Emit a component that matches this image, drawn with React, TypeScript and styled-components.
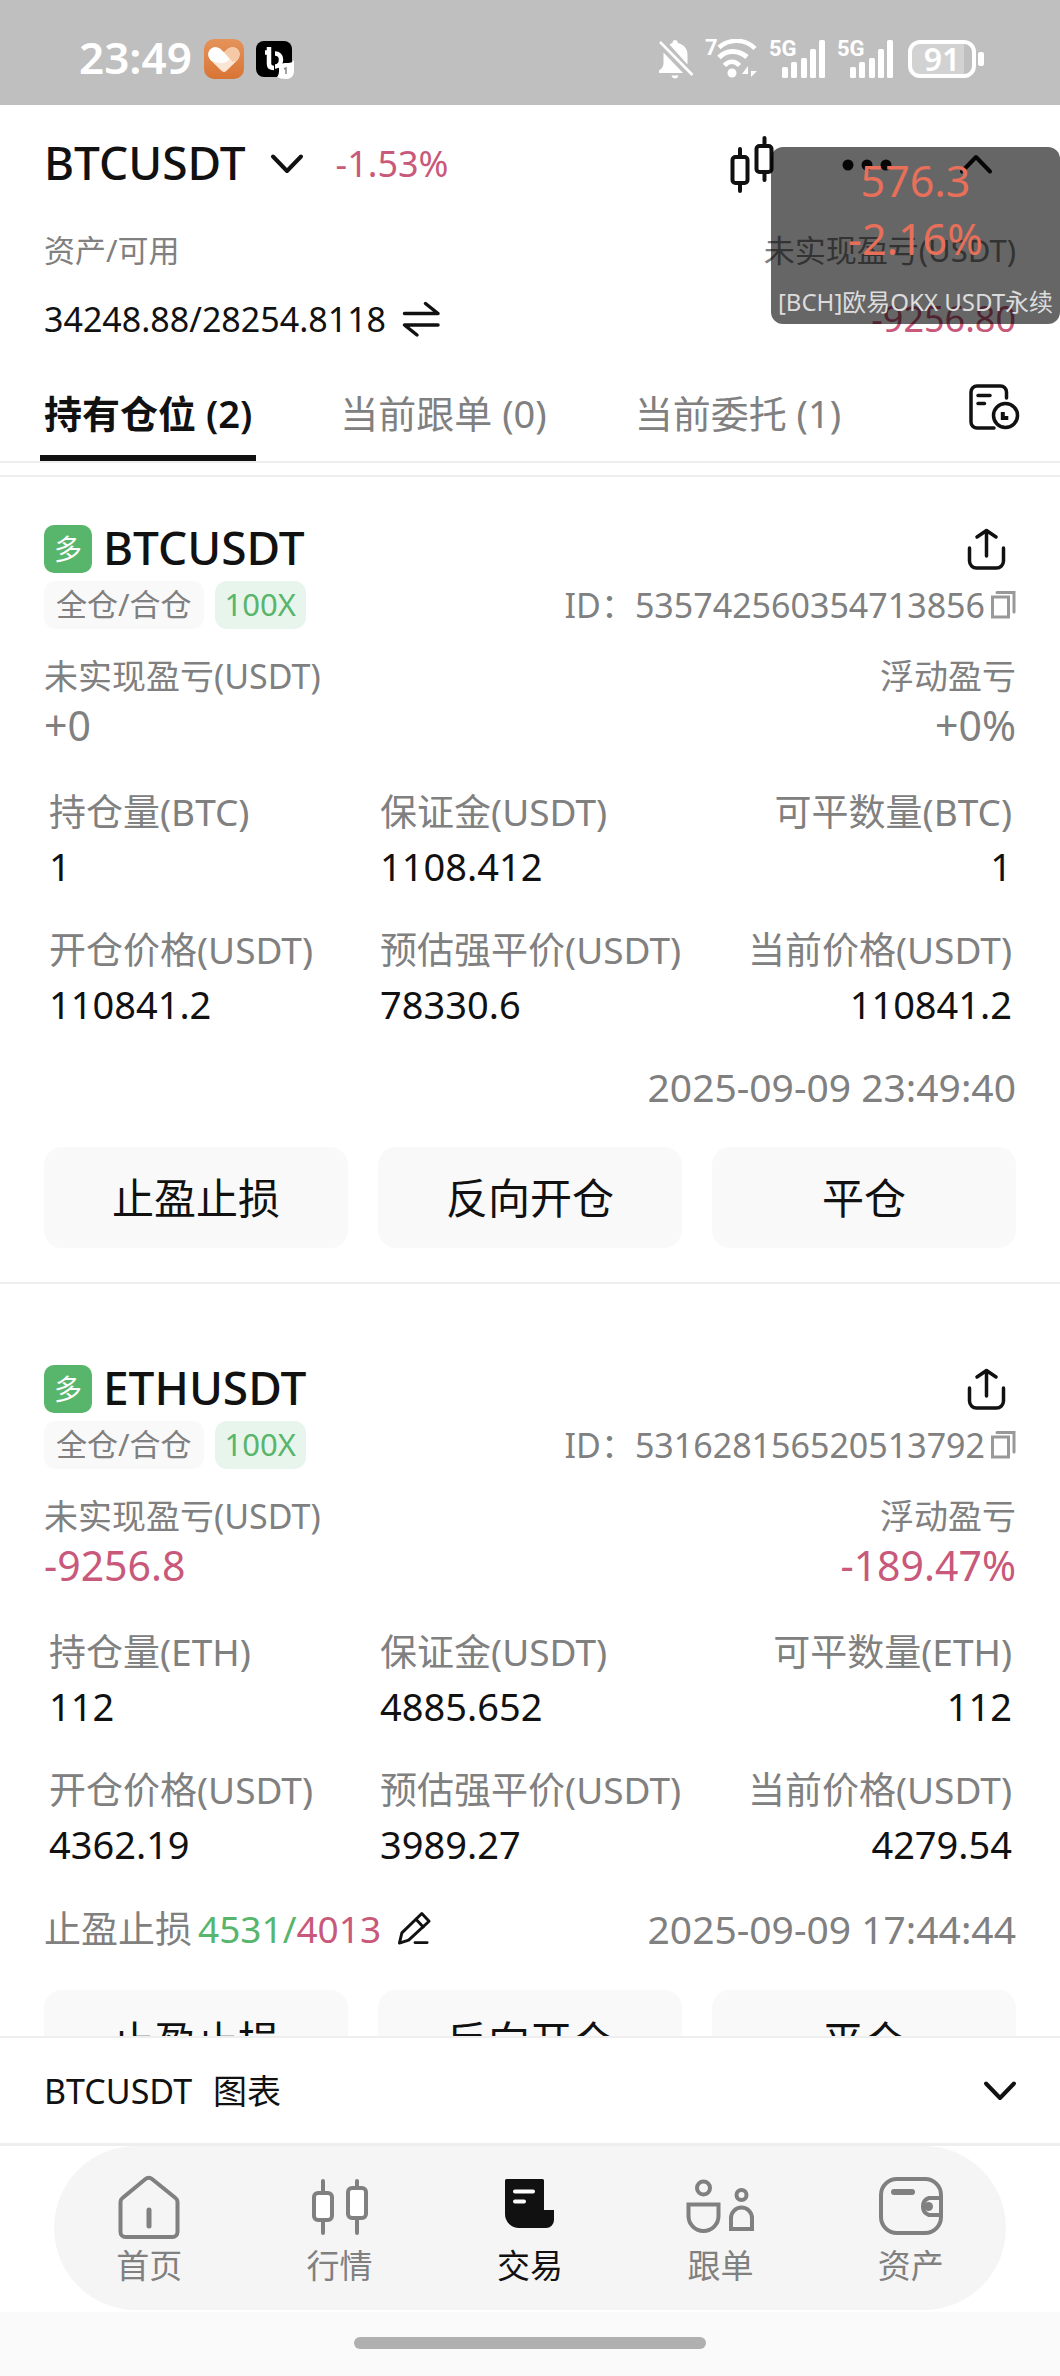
import React from "react";
import styled, { createGlobalStyle } from "styled-components";

const GREEN = "#58b56c";
const RED = "#c8597a";
const GRAY = "#808080";
const INK = "#111111";

const GlobalStyle = createGlobalStyle`
  *, *::before, *::after { box-sizing: border-box; }
  body {
    margin: 0;
    background: #ffffff;
    color: ${INK};
    font-family: "Noto Sans", "Noto Sans CJK SC", sans-serif;
  }
  button {
    font: inherit;
    color: inherit;
    background: none;
    border: 0;
    padding: 0;
    cursor: pointer;
  }
  h1, h2, dl, dt, dd, p { margin: 0; font-weight: inherit; font-size: inherit; }
  svg { display: block; flex: none; }
`;

const Screen = styled.div`
  position: relative;
  display: flex;
  flex-direction: column;
  height: 100vh;
  overflow: hidden;
  white-space: nowrap;
`;

/* ---------- status bar ---------- */

const StatusBar = styled.div`
  display: flex;
  align-items: center;
  justify-content: space-between;
  flex: none;
  height: 105px;
  padding: 12px 76px 0 79px;
  background: #bfbfbf;
  color: #ffffff;
`;

const StatusGroup = styled.div<{ $gap: number }>`
  display: flex;
  align-items: center;
  gap: ${(p) => p.$gap}px;
`;

const Clock = styled.span`
  padding-bottom: 3px;
  font-size: 44px;
  line-height: 48px;
  font-weight: 600;
`;

const Signal = styled.span`
  position: relative;
`;

const SignalLabel = styled.span`
  position: absolute;
  left: 0;
  top: -3px;
  font-family: Roboto, "Noto Sans", sans-serif;
  font-size: 22px;
  line-height: 24px;
  font-weight: 700;
`;

const WifiBox = styled(Signal)`
  padding-left: 11px;
`;

const Battery = styled.span`
  display: flex;
  align-items: center;
  gap: 2px;
  margin-left: 3px;
  &::after {
    content: "";
    width: 6px;
    height: 14px;
    border-radius: 2px;
    background: #ffffff;
  }
`;

const BatteryBody = styled.span`
  width: 68px;
  height: 38px;
  border: 4px solid #ffffff;
  border-radius: 12px;
  background: linear-gradient(90deg, #d2d2d2 86%, #bfbfbf 86%);
  font-size: 32px;
  line-height: 30px;
  font-weight: 600;
  text-align: center;
`;

/* ---------- header ---------- */

const Header = styled.header`
  flex: none;
  padding: 29px 44px 0;
`;

const HeaderRow = styled.div`
  display: flex;
  align-items: center;
  justify-content: space-between;
  height: 60px;
`;

const PairButton = styled.button`
  display: flex;
  align-items: center;
  gap: 24px;
`;

const PairGroup = styled.div`
  display: flex;
  align-items: center;
  gap: 32px;
`;

const Symbol = styled.span`
  padding-bottom: 4px;
  font-size: 46px;
  line-height: 56px;
  font-weight: 500;
`;

const Change = styled.span`
  font-size: 36px;
  line-height: 44px;
  color: ${RED};
`;

const HeaderActions = styled.div`
  display: flex;
  align-items: center;
  padding-right: 23px;
  gap: 67px;
`;

const Account = styled.dl`
  display: flex;
  justify-content: space-between;
  margin-top: 36px;
`;

const AccountItem = styled.div`
  &:last-child { text-align: right; }
`;

const AccountLabel = styled.dt`
  font-size: 31px;
  line-height: 40px;
  color: ${GRAY};
`;

const AccountValue = styled.dd`
  display: flex;
  align-items: center;
  gap: 16px;
  margin-top: 27px;
  font-size: 34px;
  line-height: 44px;
`;

const AccountPnl = styled.dd`
  margin-top: 27px;
  font-size: 36px;
  line-height: 44px;
  color: ${RED};
`;

/* ---------- tabs ---------- */

const TabBar = styled.nav`
  display: flex;
  align-items: flex-end;
  flex: none;
  gap: 80px;
  height: 122px;
  padding: 0 40px;
  border-bottom: 2px solid #eeeeee;
`;

const Tab = styled.button<{ $active?: boolean }>`
  height: 90px;
  padding: 0 4px;
  border-bottom: 6px solid ${(p) => (p.$active ? INK : "transparent")};
  font-size: 38px;
  line-height: 84px;
  font-weight: ${(p) => (p.$active ? 600 : 400)};
  color: ${(p) => (p.$active ? INK : GRAY)};
`;

const HistoryButton = styled.button`
  margin-left: auto;
  padding-bottom: 30px;
`;

/* ---------- positions ---------- */

const Positions = styled.main`
  flex: 1;
  min-height: 0;
  margin-top: 12px;
  border-top: 2px solid #eeeeee;
  overflow-y: auto;
  scrollbar-width: none;
`;

const Card = styled.article`
  padding: 81px 44px 34px;
  border-bottom: 2px solid #eeeeee;
  &:first-child { padding-top: 48px; }
`;

const Row = styled.div`
  display: flex;
  align-items: center;
  justify-content: space-between;
`;

const TitleGroup = styled.div`
  display: flex;
  align-items: center;
  gap: 11px;
  height: 48px;
`;

const Side = styled.span`
  width: 48px;
  height: 48px;
  border-radius: 10px;
  background: ${GREEN};
  color: #ffffff;
  font-size: 28px;
  line-height: 48px;
  text-align: center;
`;

const ShareButton = styled.button`
  padding-right: 8px;
`;

const TagRow = styled(Row)`
  margin-top: 8px;
  height: 48px;
`;

const Tags = styled.div`
  display: flex;
  gap: 11px;
`;

const Tag = styled.span<{ $green?: boolean }>`
  height: 48px;
  padding: 0 ${(p) => (p.$green ? 10 : 12)}px;
  border-radius: 12px;
  background: ${(p) => (p.$green ? "#e8f5ec" : "#f9f9f9")};
  color: ${(p) => (p.$green ? GREEN : GRAY)};
  font-size: 31px;
  line-height: 47px;
`;

const IdButton = styled.button`
  display: flex;
  align-items: center;
  gap: 6px;
  font-size: 34px;
  line-height: 44px;
  color: ${GRAY};
`;

const Pnl = styled.dl`
  display: flex;
  justify-content: space-between;
  margin-top: 25px;
`;

const PnlItem = styled.div`
  &:last-child { text-align: right; }
`;

const PnlLabel = styled.dt`
  font-size: 34px;
  line-height: 44px;
  color: ${GRAY};
`;

const PnlValue = styled.dd<{ $loss?: boolean }>`
  font-size: 41px;
  line-height: 54px;
  color: ${(p) => (p.$loss ? RED : GRAY)};
`;

const Stats = styled.dl`
  display: grid;
  grid-template-columns: 11fr 11fr 10fr;
  row-gap: 30px;
  margin-top: 35px;
  padding: 0 4px 0 5px;
`;

const Stat = styled.div`
  &:nth-child(3n) {
    justify-self: end;
    text-align: right;
  }
`;

const StatLabel = styled.dt`
  font-size: 37px;
  line-height: 50px;
  color: ${GRAY};
`;

const StatValue = styled.dd`
  font-size: 38px;
  line-height: 58px;
`;

const Meta = styled(Row)`
  margin-top: 29px;
  line-height: 50px;
  color: ${GRAY};
`;

const Stops = styled.div`
  display: flex;
  align-items: center;
  gap: 6px;
  font-size: 37px;
`;

const Price = styled.span<{ $color: string }>`
  color: ${(p) => p.$color};
`;

const EditButton = styled.button`
  display: flex;
  align-items: center;
  height: 53px;
  padding-left: 10px;
`;

const Time = styled.time`
  margin-left: auto;
  font-size: 39px;
`;

const Actions = styled.div`
  display: grid;
  grid-template-columns: repeat(3, 1fr);
  gap: 30px;
  margin-top: 35px;
`;

const Action = styled.button`
  height: 101px;
  border-radius: 18px;
  background: #f9f9f9;
  font-size: 42px;
  line-height: 60px;
`;

/* ---------- bottom ---------- */

const ChartBar = styled.button`
  display: flex;
  align-items: center;
  justify-content: space-between;
  flex: none;
  height: 110px;
  padding: 0 43px 0 44px;
  border-top: 2px solid #eeeeee;
  border-bottom: 3px solid #eeeeee;
  background: #ffffff;
`;

const ChartTitle = styled.span`
  display: flex;
  gap: 21px;
  font-size: 34px;
  line-height: 44px;
`;

const NavArea = styled.footer`
  flex: none;
  padding: 0 54px 2px;
`;

const Nav = styled.nav`
  display: grid;
  grid-template-columns: repeat(5, 1fr);
  padding: 28px 0 22px;
  border-radius: 82px;
  background: #f5f5f5;
`;

const NavItem = styled.a<{ $active?: boolean }>`
  display: flex;
  flex-direction: column;
  align-items: center;
  gap: 4px;
  font-size: 33px;
  line-height: 44px;
  text-decoration: none;
  color: ${(p) => (p.$active ? INK : GRAY)};
`;

const NavIcon = styled.span`
  display: flex;
  align-items: center;
  height: 66px;
`;

const HomeArea = styled.div`
  flex: none;
  display: flex;
  justify-content: center;
  padding: 25px 0 27px;
  background: #fafafa;
`;

const HomeHandle = styled.span`
  width: 33.3%;
  height: 12px;
  border-radius: 6px;
  background: #b0b0b0;
`;

/* ---------- floating ticker ---------- */

const Ticker = styled.aside`
  position: absolute;
  top: 147px;
  right: 0;
  width: 289px;
  height: 177px;
  padding-top: 5px;
  border-radius: 12px;
  background: rgba(0, 0, 0, 0.6);
  text-align: center;
`;

const TickerValue = styled.p`
  font-size: 43px;
  line-height: 58px;
  color: #e8705a;
`;

const TickerName = styled.p`
  margin-top: 4px;
  font-size: 24px;
  line-height: 60px;
  color: #dcdcdc;
`;

/* ---------- icons ---------- */

const stroke = (width: number) => ({
  fill: "none",
  stroke: "currentColor",
  strokeWidth: width,
  strokeLinecap: "round" as const,
  strokeLinejoin: "round" as const,
});

const Chevron = ({ up = false }: { up?: boolean }) => (
  <svg width="34" height="22" viewBox="0 0 34 22" {...stroke(4)}>
    <path d={up ? "M3 18.5 17 4l14 14.5" : "M3 3.5 17 18 31 3.5"} />
  </svg>
);

const HeartApp = () => (
  <svg width="40" height="40" viewBox="0 0 40 40">
    <defs>
      <linearGradient id="heartBg" x1="0" y1="0" x2="0" y2="1">
        <stop offset="0" stopColor="#e5935a" />
        <stop offset="1" stopColor="#d87435" />
      </linearGradient>
    </defs>
    <rect width="40" height="40" rx="10" fill="url(#heartBg)" />
    <path d="M20 33c-1 0-2-.6-2.800-1.400L7 21.500C3.500 18 3.500 13 6.500 10.300c3.500-3.200 8-2.300 11 .6L20 13.300l2.500-2.400c3-2.900 7.500-3.800 11-.6 3 2.700 3 7.700-.5 11.200L22.800 31.600C22 32.400 21 33 20 33z" fill="#fbe6d6" />
    <path d="M25 19 17.500 10.900c-3-2.900-7.500-3.800-11-.6-3 2.700-3 7.700.5 11.200 2 1 9 3 12 2.500s7-3 6-5z" fill="#ffffff" />
    <path d="m20 13.300 2.500-2.400c3-2.900 7.500-3.800 11-.6 3 2.700 2.500 7.700-.5 11.200l-4 1.500z" fill="#f6c9a6" />
  </svg>
);

const ClipApp = () => (
  <svg width="40" height="40" viewBox="0 0 40 40">
    <rect x="0" y="2" width="36" height="36" rx="8" fill="#000000" />
    <g fill="none" stroke="#ffffff" strokeWidth="4.500">
      <path d="M13 8v17c0 3 2 4 5 4" />
      <path d="M9 13.500h6" />
      <path d="M19 14.500c3.500 0 6 2.500 6 6 0 4-2.500 7-6 7" />
    </g>
    <path d="M23 32v-7c2 0 4-1 6-1h3c3 0 5-1 6-3v11c0 5-3 8-8 8-4 0-7-1-9-2 1-1 2-3 2-6z" fill="#ffffff" />
    <path d="m28 30 2-1v6" stroke="#888888" strokeWidth="1.500" fill="none" />
  </svg>
);

const BellOff = () => (
  <svg width="36" height="40" viewBox="0 0 36 40" fill="#ffffff">
    <path d="M5.500 13.500 25 34H1v-2.500c3-2 4.500-4 4.500-8z" />
    <path d="M11.500 5.500c1-.7 2-1.200 3-1.500C14.500 2 15.500 1 17 1s2.500 1 3 3c6 1.500 9.500 6 9.500 11v10.500z" />
    <path d="M13.500 36.500h7c-.5 2-1.800 3-3.500 3s-3-1-3.500-3z" />
    <path d="m2 3 32.500 33" stroke="#ffffff" strokeWidth="2.500" />
  </svg>
);

const Wifi = () => (
  <svg width="42" height="40" viewBox="0 0 42 40">
    <g fill="none" stroke="#ffffff" strokeWidth="4.500">
      <path d="M3 8.500C13-.5 29-.5 39 9.500" />
      <path d="M3 18.500c7.500-8 19-8 28-.5" strokeWidth="5" />
      <path d="M8.500 26.500c4-5 10.500-5 15 0" />
    </g>
    <circle cx="16" cy="34" r="4.500" fill="#ffffff" />
    <path d="M32 38V27l-6 8h6zM35 27v11l6-6h-6z" fill="#ffffff" />
  </svg>
);

const Bars = () => (
  <svg width="57" height="38" viewBox="0 0 57 38" fill="#ffffff">
    <rect x="13" y="27" width="6" height="11" rx="1.500" />
    <rect x="22" y="22" width="6" height="16" rx="1.500" />
    <rect x="32" y="18" width="6" height="20" rx="1.500" />
    <rect x="41" y="9" width="6" height="29" rx="1.500" />
    <rect x="50" y="0" width="6" height="38" rx="1.500" />
  </svg>
);

const Candles = () => (
  <svg width="46" height="58" viewBox="0 0 46 58" {...stroke(4)}>
    <path d="M11 14v7M11 49v7M35.500 3v7M35.500 38v7" />
    <rect x="3.500" y="22" width="15" height="26" rx="3" />
    <rect x="27.500" y="11" width="15" height="26" rx="3" />
  </svg>
);

const Dots = () => (
  <svg width="50" height="14" viewBox="0 0 50 14" fill="currentColor">
    <circle cx="6" cy="8" r="5.500" />
    <circle cx="25" cy="8" r="5.500" />
    <circle cx="44" cy="8" r="5.500" />
  </svg>
);

const Swap = () => (
  <svg width="38" height="38" viewBox="0 0 38 38" {...stroke(3.5)}>
    <path d="M2.500 13.500H36L23.500 3.500" />
    <path d="M36 25H2.500L15 35" />
  </svg>
);

const HistoryIcon = () => (
  <svg width="52" height="48" viewBox="0 0 52 48" {...stroke(3.5)}>
    <path d="M38.500 15V9a6 6 0 0 0-6-6H9a6 6 0 0 0-6 6v30a6 6 0 0 0 6 6h17" />
    <path d="M10 12.500h12M10 20.500h6.500" />
    <circle cx="37.500" cy="32.500" r="12" />
    <path d="M34.800 29v6h5.500" strokeWidth="4" strokeLinecap="butt" strokeLinejoin="miter" />
  </svg>
);

const Share = () => (
  <svg width="42" height="44" viewBox="0 0 42 44" {...stroke(3.5)}>
    <path d="M3.500 21v13a7 7 0 0 0 7 7h20a7 7 0 0 0 7-7V21" />
    <path d="M20.500 29V4M11 10l9.500-6.500L30 10" />
  </svg>
);

const Copy = () => (
  <svg width="25" height="30" viewBox="0 0 25 30" {...stroke(3)} opacity="0.8" strokeLinejoin="miter">
    <rect x="1.500" y="7" width="16" height="20" />
    <path d="M6 2.500h17V22" />
  </svg>
);

const Pencil = () => (
  <svg width="35" height="35" viewBox="0 0 36 36" {...stroke(3)} color={INK}>
    <path d="M2.500 33 5 22.500 25.500 2.500l7.500 8L12 30z" />
    <path d="m19.500 8.500 7.500 8M18.500 32.500H31" />
  </svg>
);

const HomeIcon = () => (
  <svg width="64" height="66" viewBox="0 0 64 66" {...stroke(4)}>
    <path d="M28.500 5a5 5 0 0 1 6.500 0l23.500 19a5 5 0 0 1 2 4v30a5 5 0 0 1-5 5h-47a5 5 0 0 1-5-5V28a5 5 0 0 1 2-4z" />
    <path d="M32 36v16" strokeWidth="5" />
  </svg>
);

const MarketIcon = () => (
  <svg width="62" height="58" viewBox="0 0 62 58" {...stroke(4)}>
    <path d="M14 3v52M48 3v52" />
    <rect x="5" y="15" width="18" height="27" rx="4" fill="#ffffff" />
    <rect x="39" y="10" width="18" height="30" rx="4" fill="#ffffff" />
  </svg>
);

const TradeIcon = () => (
  <svg width="52" height="58" viewBox="0 0 52 58">
    <path d="M2.500 1h36a1.500 1.500 0 0 1 1.500 1.500V32h10v10a8 8 0 0 1-8 8H15A14 14 0 0 1 1 36V2.500A1.500 1.500 0 0 1 2.500 1z" fill="currentColor" />
    <path d="M11 13.500h18M11 23.500h9" stroke="#ffffff" strokeWidth="4" strokeLinecap="round" />
  </svg>
);

const CopyTradeIcon = () => (
  <svg width="72" height="60" viewBox="0 0 72 60" fill="none" stroke="currentColor" strokeWidth="4">
    <circle cx="19.500" cy="11" r="6.500" />
    <path d="M4.500 27.500h30V39a15 15 0 0 1-30 0z" />
    <circle cx="57.500" cy="18" r="5" />
    <path d="M47 52V41a10.500 10.500 0 0 1 21 0v11z" />
  </svg>
);

const WalletIcon = () => (
  <svg width="66" height="62" viewBox="0 0 66 62" fill="none" stroke="currentColor" strokeWidth="4">
    <rect x="3" y="3" width="60" height="54" rx="16" />
    <path d="M16 16h18" strokeWidth="6" strokeLinecap="round" />
    <path d="M63 22H51a9 9 0 0 0 0 17h12" />
    <circle cx="50.500" cy="30.500" r="4.500" fill="currentColor" stroke="none" />
  </svg>
);

/* ---------- data ---------- */

type Position = {
  symbol: string;
  id: string;
  pnl: string;
  rate: string;
  loss?: boolean;
  stats: [string, string][];
  stops?: { profit: string; loss: string };
  time: string;
};

const positions: Position[] = [
  {
    symbol: "BTCUSDT",
    id: "535742560354713856",
    pnl: "+0",
    rate: "+0%",
    stats: [
      ["持仓量(BTC)", "1"],
      ["保证金(USDT)", "1108.412"],
      ["可平数量(BTC)", "1"],
      ["开仓价格(USDT)", "110841.2"],
      ["预估强平价(USDT)", "78330.6"],
      ["当前价格(USDT)", "110841.2"],
    ],
    time: "2025-09-09 23:49:40",
  },
  {
    symbol: "ETHUSDT",
    id: "531628156520513792",
    pnl: "-9256.8",
    rate: "-189.47%",
    loss: true,
    stats: [
      ["持仓量(ETH)", "112"],
      ["保证金(USDT)", "4885.652"],
      ["可平数量(ETH)", "112"],
      ["开仓价格(USDT)", "4362.19"],
      ["预估强平价(USDT)", "3989.27"],
      ["当前价格(USDT)", "4279.54"],
    ],
    stops: { profit: "4531", loss: "4013" },
    time: "2025-09-09 17:44:44",
  },
];

const tabs = ["持有仓位 (2)", "当前跟单 (0)", "当前委托 (1)"];

const navItems = [
  { label: "首页", icon: <HomeIcon /> },
  { label: "行情", icon: <MarketIcon /> },
  { label: "交易", icon: <TradeIcon />, active: true },
  { label: "跟单", icon: <CopyTradeIcon /> },
  { label: "资产", icon: <WalletIcon /> },
];

const PositionCard = ({ data }: { data: Position }) => (
  <Card>
    <Row>
      <TitleGroup>
        <Side>多</Side>
        <Symbol as="h2">{data.symbol}</Symbol>
      </TitleGroup>
      <ShareButton aria-label="分享"><Share /></ShareButton>
    </Row>
    <TagRow>
      <Tags>
        <Tag>全仓/合仓</Tag>
        <Tag $green>100X</Tag>
      </Tags>
      <IdButton>
        <span>ID：{data.id}</span>
        <Copy />
      </IdButton>
    </TagRow>
    <Pnl>
      <PnlItem>
        <PnlLabel>未实现盈亏(USDT)</PnlLabel>
        <PnlValue $loss={data.loss}>{data.pnl}</PnlValue>
      </PnlItem>
      <PnlItem>
        <PnlLabel>浮动盈亏</PnlLabel>
        <PnlValue $loss={data.loss}>{data.rate}</PnlValue>
      </PnlItem>
    </Pnl>
    <Stats>
      {data.stats.map(([label, value]) => (
        <Stat key={label}>
          <StatLabel>{label}</StatLabel>
          <StatValue>{value}</StatValue>
        </Stat>
      ))}
    </Stats>
    <Meta>
      {data.stops && (
        <Stops>
          <span>止盈止损</span>
          <span>
            <Price $color={GREEN}>{data.stops.profit}/</Price>
            <Price $color={RED}>{data.stops.loss}</Price>
          </span>
          <EditButton aria-label="编辑"><Pencil /></EditButton>
        </Stops>
      )}
      <Time>{data.time}</Time>
    </Meta>
    <Actions>
      <Action>止盈止损</Action>
      <Action>反向开仓</Action>
      <Action>平仓</Action>
    </Actions>
  </Card>
);

export default function App() {
  return (
    <Screen>
      <GlobalStyle />
      <StatusBar>
        <StatusGroup $gap={12}>
          <Clock>23:49</Clock>
          <HeartApp />
          <ClipApp />
        </StatusGroup>
        <StatusGroup $gap={11}>
          <BellOff />
          <WifiBox>
            <SignalLabel>7</SignalLabel>
            <Wifi />
          </WifiBox>
          <Signal>
            <SignalLabel>5G</SignalLabel>
            <Bars />
          </Signal>
          <Signal>
            <SignalLabel>5G</SignalLabel>
            <Bars />
          </Signal>
          <Battery>
            <BatteryBody>91</BatteryBody>
          </Battery>
        </StatusGroup>
      </StatusBar>

      <Header>
        <HeaderRow>
          <PairGroup>
            <PairButton>
              <Symbol>BTCUSDT</Symbol>
              <Chevron />
            </PairButton>
            <Change>-1.53%</Change>
          </PairGroup>
          <HeaderActions>
            <button aria-label="K线"><Candles /></button>
            <button aria-label="更多"><Dots /></button>
            <button aria-label="收起"><Chevron up /></button>
          </HeaderActions>
        </HeaderRow>
        <Account>
          <AccountItem>
            <AccountLabel>资产/可用</AccountLabel>
            <AccountValue>
              34248.88/28254.8118
              <button aria-label="划转"><Swap /></button>
            </AccountValue>
          </AccountItem>
          <AccountItem>
            <AccountLabel>未实现盈亏(USDT)</AccountLabel>
            <AccountPnl>-9256.80</AccountPnl>
          </AccountItem>
        </Account>
      </Header>

      <TabBar>
        {tabs.map((label, i) => (
          <Tab key={label} $active={i === 0}>{label}</Tab>
        ))}
        <HistoryButton aria-label="历史记录"><HistoryIcon /></HistoryButton>
      </TabBar>

      <Positions>
        {positions.map((p) => <PositionCard key={p.id} data={p} />)}
      </Positions>

      <ChartBar>
        <ChartTitle>
          <span>BTCUSDT</span>
          <span>图表</span>
        </ChartTitle>
        <Chevron />
      </ChartBar>

      <NavArea>
        <Nav>
          {navItems.map((item) => (
            <NavItem key={item.label} href="#" $active={item.active}>
              <NavIcon>{item.icon}</NavIcon>
              {item.label}
            </NavItem>
          ))}
        </Nav>
      </NavArea>

      <HomeArea>
        <HomeHandle />
      </HomeArea>

      <Ticker>
        <TickerValue>576.3</TickerValue>
        <TickerValue>-2.16%</TickerValue>
        <TickerName>[BCH]欧易OKX USDT永续</TickerName>
      </Ticker>
    </Screen>
  );
}
